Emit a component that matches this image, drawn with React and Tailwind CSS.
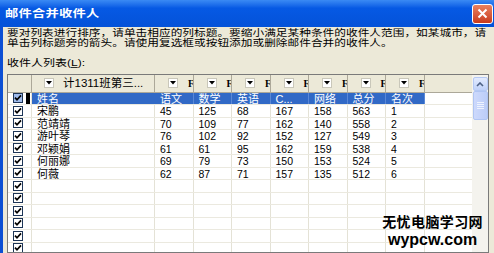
import React from 'react';

// 第一行是被选中的表头数据行
const rows = [
  ['姓名', '语文', '数学', '英语', 'C...', '网络', '总分', '名次'],
  ['宋鹏', '45', '125', '68', '167', '158', '563', '1'],
  ['范靖靖', '70', '109', '77', '162', '140', '558', '2'],
  ['游叶琴', '76', '102', '92', '152', '127', '549', '3'],
  ['邓颖娟', '61', '61', '95', '162', '159', '538', '4'],
  ['何丽娜', '69', '79', '73', '150', '153', '524', '5'],
  ['何薇', '62', '87', '71', '157', '135', '512', '6'],
  ...Array.from({ length: 8 }, () => ['', '', '', '', '', '', '', '']),
];

const CheckBox = ({ active }) => (
  <div
    className={`w-[10px] h-[10px] border border-[#1d3557] flex items-center justify-center ${
      active ? 'bg-[#9fbbec]' : 'bg-white'
    }`}
  >
    <svg width="8" height="8" viewBox="0 0 8 8">
      <path d="M1 3.6 L3 5.8 L7 1.4" stroke="#000" strokeWidth="1.7" fill="none" />
    </svg>
  </div>
);

const Drop = () => (
  <div className="w-[10px] h-[10px] shrink-0 bg-white border border-[#c9c7ba] flex items-center justify-center">
    <svg width="6" height="4" viewBox="0 0 6 4">
      <path d="M0 0 H6 L3 3.5 Z" fill="#000" />
    </svg>
  </div>
);

const App = () => {
  return (
    <div className="relative w-[494px] h-[253px] overflow-hidden flex flex-col bg-[#ece9d8] text-black font-['Liberation_Sans','Noto_Sans_CJK_SC',sans-serif]">
      {/* Title bar */}
      <div className="h-[27px] shrink-0 flex items-center pl-[5px] pr-[1px] bg-linear-to-b from-[#3a8af4] via-[#0659e4] via-30% to-[#0452d8]">
        <span className="inline-block scale-y-[0.8] text-[13.3px] font-bold text-white tracking-[0.2px] whitespace-nowrap">
          邮件合并收件人
        </span>
        <div className="ml-auto w-[21px] h-[20px] rounded-[3px] border border-white bg-linear-to-b from-[#e9805f] to-[#c8391a] flex items-center justify-center">
          <svg width="11" height="11" viewBox="0 0 11 11">
            <path d="M1.5 1.5 L9.5 9.5 M9.5 1.5 L1.5 9.5" stroke="#fff" strokeWidth="2" />
          </svg>
        </div>
      </div>

      <div className="flex-1 flex flex-col border-l-[3px] border-[#0c4fd4] pl-[4px] min-h-0">
        {/* Description */}
        <div className="h-[19px] mt-[1px] shrink-0">
          <div className="origin-top scale-y-[0.8] text-[11.7px] leading-[11.6px] whitespace-nowrap">
            <div>要对列表进行排序，请单击相应的列标题。要缩小满足某种条件的收件人范围，如某城市，请</div>
            <div>单击列标题旁的箭头。请使用复选框或按钮添加或删除邮件合并的收件人。</div>
          </div>
        </div>

        <div className="h-[14px] mt-[9px] shrink-0 flex items-center">
          <span className="inline-block scale-y-[0.8] text-[12px] leading-[14px] whitespace-nowrap">
            收件人列表(<span className="underline">L</span>):
          </span>
        </div>

        {/* Recipient grid */}
        <div className="mt-[4px] w-[482px] flex-1 min-h-0 border border-[#7a7a7a] bg-white flex overflow-hidden">
          <div className="flex-1 flex flex-col">
            {/* Column headers */}
            <div className="h-[17.5px] shrink-0 flex bg-[#ece9d8] border-b border-[#aca899] text-[11px]">
              <div className="w-[24px] border-r border-[#aca899]" />
              <div className="w-[123px] flex items-center pl-[12px] border-r border-[#aca899] overflow-hidden whitespace-nowrap">
                <Drop />
                <span className="ml-[9px] text-[11.5px]">计1311班第三...</span>
              </div>
              {[0, 1, 2, 3, 4, 5, 6].map(i => (
                <div
                  key={i}
                  className="w-[38.5px] flex items-center pl-[13px] border-r border-[#aca899] overflow-hidden"
                >
                  <Drop />
                  <span className="ml-[10px] font-bold text-[10px] font-['Liberation_Serif',serif]">F</span>
                </div>
              ))}
              <div className="flex-1" />
            </div>

            {/* Rows */}
            {rows.map((row, r) => {
              const selected = r === 0;
              return (
                <div key={r} className="h-[12.5px] shrink-0 flex border-b border-[#ebe9df] text-[10.5px] leading-[12px]">
                  <div className="w-[24px] flex items-center pl-[5px] border-r border-[#e4e2d6]">
                    <CheckBox active={selected} />
                    {selected && <div className="ml-auto mr-[1px] w-[4px] h-full bg-black" />}
                  </div>
                  <div
                    className={`w-[123px] pl-[5px] border-r whitespace-nowrap text-[11px] ${
                      selected ? 'bg-[#3169c6] text-white border-[#3169c6]' : 'border-[#e4e2d6]'
                    }`}
                  >
                    {row[0]}
                  </div>
                  {row.slice(1).map((cell, c) => (
                    <div
                      key={c}
                      className={`w-[38.5px] pl-[5px] border-r whitespace-nowrap overflow-hidden ${
                        selected ? 'bg-[#3169c6] text-white border-[#5a88d6] text-[11px]' : 'border-[#e4e2d6]'
                      }`}
                    >
                      {cell}
                    </div>
                  ))}
                  <div className="flex-1" />
                </div>
              );
            })}
          </div>

          {/* Scrollbar */}
          <div className="w-[16px] shrink-0 bg-[#f4f3ee] flex flex-col items-center pt-[2px]">
            <div className="w-[15px] h-[14px] rounded-[2px] border border-[#b5c9f4] bg-linear-to-b from-[#e3ebfe] to-[#bfd1f9] flex items-center justify-center">
              <svg width="8" height="5" viewBox="0 0 8 5">
                <path d="M1 4 L4 1 L7 4" stroke="#4d6185" strokeWidth="1.6" fill="none" />
              </svg>
            </div>
            <div className="w-[15px] h-[29px] rounded-[2px] border border-[#b0c5f3] bg-linear-to-r from-[#cdd9fc] to-[#bccdf8] flex flex-col items-center justify-center gap-[1px]">
              <div className="w-[7px] h-[1px] bg-[#eef3fe]" />
              <div className="w-[7px] h-[1px] bg-[#eef3fe]" />
              <div className="w-[7px] h-[1px] bg-[#eef3fe]" />
              <div className="w-[7px] h-[1px] bg-[#eef3fe]" />
            </div>
          </div>
        </div>
      </div>

      {/* Watermark */}
      <div className="absolute right-[11px] bottom-[4px] flex flex-col items-center font-bold">
        <span className="text-[14px] leading-[16px] tracking-[0.4px]">无忧电脑学习网</span>
        <span className="text-[16px] leading-[18px] mt-[1px]">wypcw.com</span>
      </div>
    </div>
  );
};

export default App;
